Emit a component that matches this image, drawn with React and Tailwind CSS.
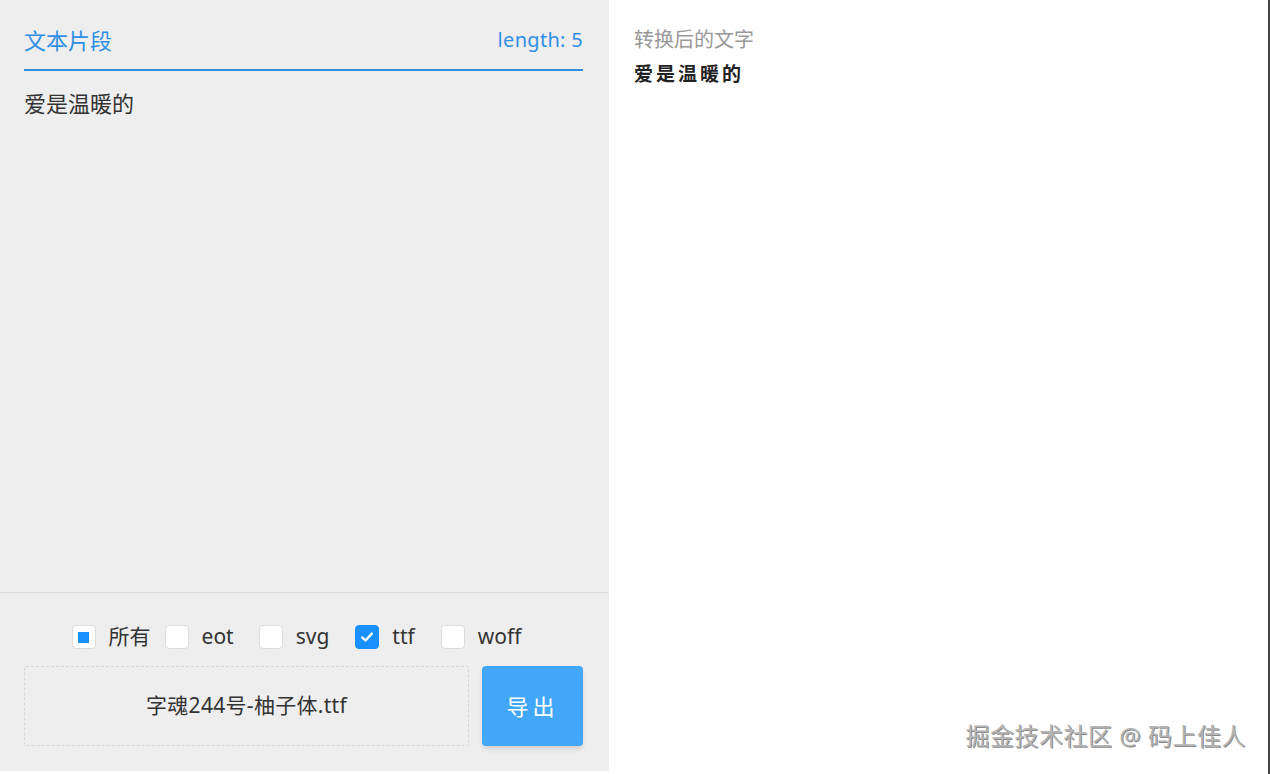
import React from "react";

const font = { fontFamily: '"Noto Sans", "Noto Sans CJK SC", sans-serif' };

const Box = ({ checked, indeterminate, label, className = "" }) => (
    <label className={`flex items-center gap-[13px] ${className}`}>
        <span
            className={`w-6 h-6 rounded-[4px] flex items-center justify-center ${checked
                ? "bg-[#1890ff] border border-[#1890ff]"
                : "bg-white border border-[#dcdcdc]"
                }`}
        >
            {indeterminate && <span className="w-[11px] h-[11px] bg-[#1890ff]" />}
            {checked && (
                <svg width="16" height="16" viewBox="0 0 16 16" fill="none">
                    <path d="M3.2 8.4 6.5 11.5 12.8 4.6" stroke="#fff" strokeWidth="2.4" strokeLinecap="round" strokeLinejoin="round" />
                </svg>
            )}
        </span>
        <span className="text-[21px] text-[#333]">{label}</span>
    </label>
);

const App = () => {
    return (
        <div
            className="w-[1270px] h-[774px] flex bg-white border-r-2 border-[#444] overflow-hidden relative"
            style={font}
        >
            <div className="w-[609px] h-[771px] bg-[#eeeeee] flex flex-col shrink-0">
                <div className="pl-6 pr-[26px] pt-[24px]">
                    <div className="flex justify-between items-center h-[32px] border-b-2 border-[#2f8fe0] box-content pb-[13px]">
                        <span className="text-[22px] text-[#2f8fe6]">文本片段</span>
                        <span className="text-[20px] text-[#2f8fe6] tracking-[0.3px]">length: 5</span>
                    </div>
                    <div className="pt-[16px] text-[22px] text-[#333]">爱是温暖的</div>
                </div>
                <div className="flex-1" />
                <div className="border-t border-[#dedede] pl-6 pr-[26px] pt-[32px] pb-[25px]">
                    <div className="flex justify-center items-center h-6 -ml-[14px]">
                        <Box indeterminate label="所有" className="mr-[14px]" />
                        <Box label="eot" className="mr-[25px]" />
                        <Box label="svg" className="mr-[26px]" />
                        <Box checked label="ttf" className="mr-[26px]" />
                        <Box label="woff" />
                    </div>
                    <div className="flex gap-[13px] mt-[17px]">
                        <div className="flex-1 h-[80px] border border-dashed border-[#d6d6d6] rounded-[2px] flex items-center justify-center text-[21px] text-[#333] tracking-[0.3px]">
                            字魂244号-柚子体.ttf
                        </div>
                        <button className="w-[101px] h-[80px] bg-[#42a7f8] rounded-[4px] text-white text-[22px] tracking-[4px] shadow-md">
                            导出
                        </button>
                    </div>
                </div>
            </div>
            <div className="flex-1 px-[25px] pt-[26px]">
                <div className="text-[20px] text-[#999] leading-[28px]">转换后的文字</div>
                <div className="text-[19px] font-bold text-[#222] tracking-[3px] mt-[6px]">爱是温暖的</div>
            </div>
            <div
                className="absolute right-[22px] bottom-[20px] text-[24px] text-[#b4b4b4] tracking-[0.5px]"
                style={{ textShadow: "1px 1px 0 rgba(60,60,60,0.6)" }}
            >
                掘金技术社区 @ 码上佳人
            </div>
        </div>
    );
};

export default App;
